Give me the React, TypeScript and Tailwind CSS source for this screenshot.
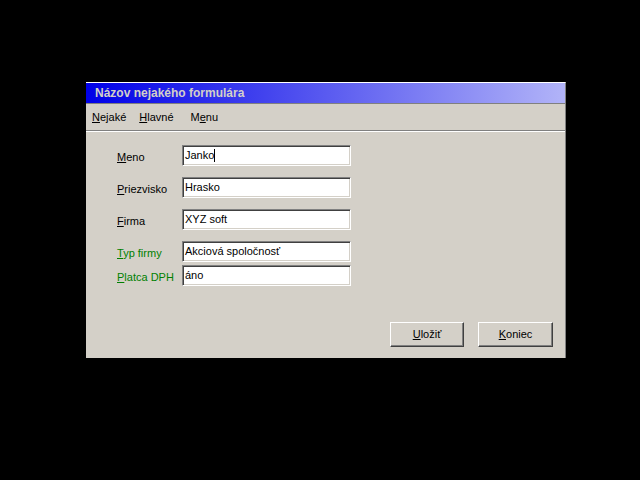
import React from "react";

const font = { fontFamily: '"Liberation Sans", Arial, sans-serif' };

function Field({ value, caret }: { value: string; caret?: boolean }) {
  return (
    <div className="w-[169px] h-[21px] bg-white border border-t-[#808080] border-l-[#808080] border-b-white border-r-white shadow-[inset_1px_1px_0_#404040,inset_-1px_-1px_0_#d4d0c8] flex items-center pl-[2px] text-[11px] text-black leading-none">
      <span>{value}</span>
      {caret && <span className="inline-block w-px h-[13px] bg-black" />}
    </div>
  );
}

function Row({
  u,
  rest,
  value,
  green,
  caret,
  cls,
}: {
  u: string;
  rest: string;
  value: string;
  green?: boolean;
  caret?: boolean;
  cls?: string;
}) {
  return (
    <div className={"flex items-center " + (cls ?? "")}>
      <div
        className={
          "w-[65px] text-[11px] pt-[3px] leading-none " +
          (green ? "text-[#008000]" : "text-black")
        }
      >
        <u>{u}</u>
        {rest}
      </div>
      <Field value={value} caret={caret} />
    </div>
  );
}

function Button({ u, rest }: { u: string; rest: string }) {
  return (
    <div className="h-[25px] flex items-center justify-center bg-[#d4d0c8] border border-t-white border-l-white border-b-[#404040] border-r-[#404040] shadow-[inset_-1px_-1px_0_#808080] text-[11px] text-black leading-none">
      <span>
        <u>{u}</u>
        {rest}
      </span>
    </div>
  );
}

export default function App() {
  return (
    <div className="w-[640px] h-[480px] bg-black pt-[82px] pl-[86px]" style={font}>
      <div className="w-[480px] h-[276px] bg-[#d4d0c8] border-t border-t-white border-r border-r-[#808080] flex flex-col">
        <div className="h-[20px] bg-[linear-gradient(to_right,#0000e8,#b2b4f8)] flex items-center pl-[9px] text-[12px] font-bold text-[#d4d0c8] leading-none">
          Názov nejakého formulára
        </div>
        <div className="h-px bg-[#808080]" />
        <div className="h-[26px] flex items-center pl-[6px] text-[11px] text-black leading-none pt-[1px]">
          <span>
            <u>N</u>ejaké
          </span>
          <span className="ml-[13px]">
            <u>H</u>lavné
          </span>
          <span className="ml-[17px]">
            M<u>e</u>nu
          </span>
        </div>
        <div className="h-px bg-[#808080]" />
        <div className="h-px bg-white" />
        <div className="flex flex-col pl-[31px] pt-[13px]">
          <Row u="M" rest="eno" value="Janko" caret />
          <Row u="P" rest="riezvisko" value="Hrasko" cls="mt-[11px]" />
          <Row u="F" rest="irma" value="XYZ soft" cls="mt-[11px]" />
          <Row u="T" rest="yp firmy" value="Akciová spoločnosť" green cls="mt-[11px]" />
          <Row u="P" rest="latca DPH" value="áno" green cls="mt-[3px]" />
        </div>
        <div className="flex justify-end gap-[14px] pr-[12px] mt-[36px]">
          <div className="w-[74px]">
            <Button u="U" rest="ložiť" />
          </div>
          <div className="w-[75px]">
            <Button u="K" rest="oniec" />
          </div>
        </div>
      </div>
    </div>
  );
}
